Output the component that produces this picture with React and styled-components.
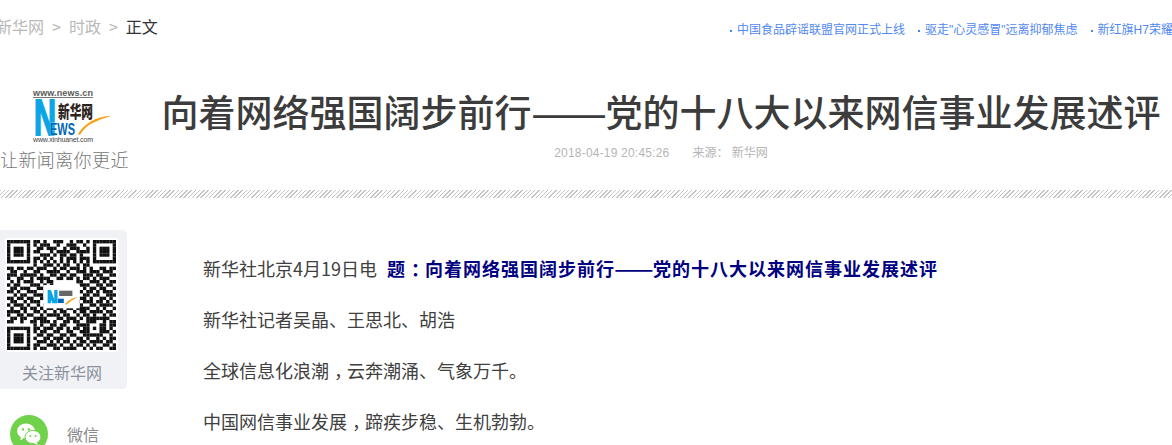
import React from 'react'
import styled, { createGlobalStyle } from 'styled-components'

const CJK = `"Noto Sans CJK SC", "Liberation Sans", sans-serif`

const GlobalStyle = createGlobalStyle`
	html, body {
		margin: 0;
		padding: 0;
		background: #fff;
		overflow: hidden;
	}
	body {
		font-family: "Liberation Sans", "Noto Sans CJK SC", sans-serif;
	}
`

const PageX = styled.div`
	width: 1172px;
	height: 445px;
	overflow: hidden;
`

const TopBarX = styled.div`
	height: 54px;
	display: flex;
	justify-content: space-between;
`

const CrumbsX = styled.div`
	display: flex;
	align-items: center;
	gap: 8px;
	height: 52px;
	margin-left: -4px;
	font-family: ${CJK};
	font-size: 16px;
	color: #b9b9b9;
`

const CrumbCurrentX = styled.span`
	color: #333;
`

const NewsLinksX = styled.div`
	width: 442px;
	display: flex;
	gap: 13px;
	height: 60px;
	overflow: hidden;
	font-size: 12px;
	line-height: 60px;
	white-space: nowrap;
	color: #5288f0;
`

const NewsLinkX = styled.a`
	flex-shrink: 0;

	&::before {
		content: '';
		display: inline-block;
		width: 2px;
		height: 2px;
		margin-right: 5px;
		vertical-align: middle;
		background: #3d8be8;
	}
`

const HeaderX = styled.header`
	height: 136px;
	display: flex;
`

const BrandX = styled.div`
	width: 162px;
	flex-shrink: 0;
	padding-top: 33px;
`

const TaglineX = styled.div`
	width: 130px;
	margin-top: -1px;
	font-family: ${CJK};
	font-size: 18px;
	font-weight: 300;
	line-height: 22px;
	letter-spacing: 0.4px;
	white-space: nowrap;
	color: #777;
`

const HeadlineX = styled.div`
	width: 998px;
	flex-shrink: 0;
	display: flex;
	flex-direction: column;
	align-items: center;
`

const TitleX = styled.h1`
	margin: 31px 0 0;
	font-family: ${CJK};
	font-size: 37px;
	font-weight: 500;
	line-height: 52px;
	white-space: nowrap;
	color: #3c3c3c;
`

const MetaX = styled.div`
	margin-top: 8px;
	display: flex;
	justify-content: center;
	gap: 23px;
	font-size: 12px;
	line-height: 16px;
	color: #b5b5b5;
`

const DateX = styled.span`
	letter-spacing: 0.2px;
`

const HatchX = styled.div`
	height: 8px;
	background: repeating-linear-gradient(135deg, #c4c4c4 0 1px, #fff 1px 3px);
`

const MainX = styled.main`
	display: flex;
	padding-top: 32px;
`

const SidebarX = styled.aside`
	width: 127px;
	flex-shrink: 0;
`

const QrCardX = styled.div`
	height: 159px;
	padding: 8px 0 0 5px;
	box-sizing: border-box;
	background: #f0f2f6;
	border-radius: 0 5px 5px 0;
	text-align: center;
`

const QrFrameX = styled.div`
	width: 113px;
	height: 114px;
	padding: 2px;
	box-sizing: border-box;
	background: #fff;
`

const QrLabelX = styled.div`
	margin: 8px 3px 0 -5px;
	font-family: ${CJK};
	font-size: 16px;
	line-height: 24px;
	color: #8b919c;
`

const ShareRowX = styled.div`
	display: flex;
	align-items: center;
	gap: 19px;
	margin: 26px 0 0 10px;
`

const ShareIconX = styled.div`
	width: 38px;
	height: 38px;
	display: flex;
	align-items: center;
	justify-content: center;
	border-radius: 50%;
	background: #6fd24a;
`

const ShareLabelX = styled.span`
	font-family: ${CJK};
	font-size: 16px;
	color: #8a8a8a;
`

const ArticleX = styled.article`
	margin-left: 76px;
	margin-top: 25px;
`

const ParagraphX = styled.p`
	margin: 0 0 24px;
	font-family: ${CJK};
	font-size: 18px;
	line-height: 27px;
	white-space: nowrap;
	color: #404040;
`

const LeadTitleX = styled.strong`
	margin-left: 10px;
	font-weight: 700;
	letter-spacing: 1px;
	color: #000080;
`

// full-width punctuation sits mid-cell in the original font
const PunctX = styled.span`
	padding-left: ${props => props.$shift}px;
	margin-right: -${props => props.$shift}px;
`

// the em dashes here come out narrower than two full cells, stretch them
const DashX = styled.span`
	display: inline-block;
	width: ${props => props.$cells}em;
	letter-spacing: 0;
	text-align: center;
	transform: scaleX(${props => props.$stretch});
`

const Logo = () => (
	<svg width="130" height="62" viewBox="0 0 130 62" style={{ display: 'block' }}>
		<text x="33" y="9" fontFamily="Liberation Sans" fontSize="9" fontWeight="700" textLength="60" fill="#5a5a5a">www.news.cn</text>
		<rect x="33" y="10" width="60" height="1" fill="#777" />
		<text x="34" y="48" fontFamily="Liberation Sans" fontSize="50" fontWeight="700" textLength="22" lengthAdjust="spacingAndGlyphs" fill="#0aa5e6" stroke="#0aa5e6" strokeWidth="2">N</text>
		<text x="58" y="31" fontFamily="Noto Sans CJK SC" fontSize="17" fontWeight="900" textLength="35" lengthAdjust="spacingAndGlyphs" fill="#2b2320" stroke="#fff" strokeWidth="1" paintOrder="stroke">新华网</text>
		<text x="50" y="48" fontFamily="Liberation Sans" fontSize="17" fontWeight="700" textLength="25" lengthAdjust="spacingAndGlyphs" fill="#0068b7" stroke="#fff" strokeWidth="0.5" paintOrder="stroke">EWS</text>
		<path d="M78 47 C84 37 96 29 111 29 C104 31 96 34 89 38 C85 41 82 44 80 48 Z" fill="#f5a21a" />
		<text x="33" y="55" fontFamily="Liberation Sans" fontSize="7" textLength="60" fill="#444">www.xinhuanet.com</text>
	</svg>
)

const QR_ROWS = [
	'111111101101001110010110101111111',
	'100000101011100100111001001000001',
	'101110100110111001011100101011101',
	'101110101100010111100111101011101',
	'101110100011101011011010001011101',
	'100000101101010010111011101000001',
	'111111101010101010101010101111111',
	'000000001001110101100101100000000',
	'110110110111001011011101010011011',
	'011001001100111100100111011101110',
	'111011111010011011011001110110011',
	'100110010111100110110101101011100',
	'010101110010110000000110011101011',
	'101100011101010000000011100110110',
	'011011100110100000000001011011001',
	'110100111001000000000010110101110',
	'001011001110000000000001101100111',
	'110110110011000000000011010011010',
	'011001011100100000000101110110101',
	'101110100101011000001010011011110',
	'010011011010110110110111100101001',
	'111101001101001011001011011110110',
	'100110110010111101100101101001011',
	'011011001111000110111010111111100',
	'110010011011101001101100111001011',
	'000000001010011011000111100011011',
	'111111101101110110101101101011010',
	'100000101011001100110011100011101',
	'101110100110110011011001111110010',
	'101110101001101110100110100101011',
	'101110100111010101101011011110110',
	'100000101100111010010110101001101',
	'111111101011001101111001010110011'
]

const QrCode = () => (
	<svg width="109" height="110" viewBox="0 0 33 33" preserveAspectRatio="none" style={{ display: 'block' }}>
		{QR_ROWS.map( ( row, y ) => row.split( '' ).map( ( cell, x ) => cell === '1' && (
			<rect key={`${x}-${y}`} x={x} y={y} width="1.02" height="1.02" fill="#111" />
		) ) )}
		<rect x="11" y="13.5" width="11" height="7" fill="#fff" />
		<path d="M12.3 15h1v4h-1zM13.3 15l1.4 4h-1l-1.4-4zM14.3 15h1v4h-1z" fill="#0aa5e6" />
		<rect x="15.8" y="15.2" width="4" height="1.6" fill="#666" />
		<rect x="15.4" y="17.6" width="1.8" height="1.3" fill="#0068b7" />
		<path d="M17.6 19.2 C18.6 18 20 17.3 21.4 17.1 C20 17.9 18.8 18.6 18 19.4 Z" fill="#f5a21a" />
	</svg>
)

const WechatIcon = () => (
	<svg width="26" height="24" viewBox="0 0 26 24">
		<ellipse cx="10" cy="9" rx="9" ry="7.6" fill="#fff" />
		<path d="M5 14 L4.4 18.4 L9 15 Z" fill="#fff" />
		<ellipse cx="17" cy="15" rx="8" ry="6.6" fill="#fff" stroke="#6fd24a" strokeWidth="1" />
		<path d="M20.6 20 L22 23 L17.4 21 Z" fill="#fff" />
		<circle cx="7" cy="7.4" r="1.2" fill="#6fd24a" />
		<circle cx="13" cy="7.4" r="1.2" fill="#6fd24a" />
		<circle cx="14.4" cy="14" r="1" fill="#6fd24a" />
		<circle cx="19.6" cy="14" r="1" fill="#6fd24a" />
	</svg>
)

const App = () => (
	<PageX>
		<GlobalStyle />
		<TopBarX>
			<CrumbsX>
				<span>新华网</span>
				<span>&gt;</span>
				<span>时政</span>
				<span>&gt;</span>
				<CrumbCurrentX>正文</CrumbCurrentX>
			</CrumbsX>
			<NewsLinksX>
				<NewsLinkX>中国食品辟谣联盟官网正式上线</NewsLinkX>
				<NewsLinkX>驱走"心灵感冒"远离抑郁焦虑</NewsLinkX>
				<NewsLinkX>新红旗H7荣耀上市</NewsLinkX>
			</NewsLinksX>
		</TopBarX>
		<HeaderX>
			<BrandX>
				<Logo />
				<TaglineX>让新闻离你更近</TaglineX>
			</BrandX>
			<HeadlineX>
				<TitleX>向着网络强国阔步前行<DashX $cells={2} $stretch={1.22}>——</DashX>党的十八大以来网信事业发展述评</TitleX>
				<MetaX>
					<DateX>2018-04-19 20:45:26</DateX>
					<span>来源： 新华网</span>
				</MetaX>
			</HeadlineX>
		</HeaderX>
		<HatchX />
		<MainX>
			<SidebarX>
				<QrCardX>
					<QrFrameX><QrCode /></QrFrameX>
					<QrLabelX>关注新华网</QrLabelX>
				</QrCardX>
				<ShareRowX>
					<ShareIconX><WechatIcon /></ShareIconX>
					<ShareLabelX>微信</ShareLabelX>
				</ShareRowX>
			</SidebarX>
			<ArticleX>
				<ParagraphX>新华社北京4月19日电<LeadTitleX>题<PunctX $shift={5}>：</PunctX>向着网络强国阔步前行<DashX $cells={2.11} $stretch={1.28}>——</DashX>党的十八大以来网信事业发展述评</LeadTitleX></ParagraphX>
				<ParagraphX>新华社记者吴晶、王思北、胡浩</ParagraphX>
				<ParagraphX>全球信息化浪潮<PunctX $shift={5}>，</PunctX>云奔潮涌、气象万千。</ParagraphX>
				<ParagraphX>中国网信事业发展<PunctX $shift={5}>，</PunctX>蹄疾步稳、生机勃勃。</ParagraphX>
			</ArticleX>
		</MainX>
	</PageX>
)

export default App
